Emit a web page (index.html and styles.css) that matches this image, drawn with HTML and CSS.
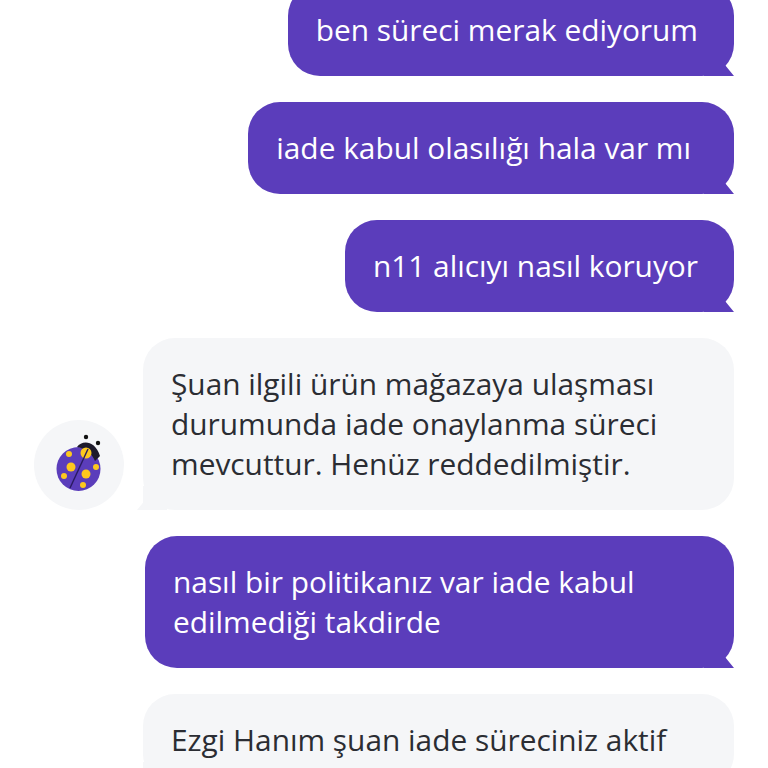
FILE: index.html
```html
<!DOCTYPE html>
<html lang="en">
<head>
    <meta charset="UTF-8">
    <meta name="viewport" content="width=device-width, initial-scale=1.0">
    <title>Chat</title>
    <link rel="stylesheet" href="styles.css">
</head>
<body>
    <div class="chat">
        <div class="row">
            <div class="bubble sent">ben süreci merak ediyorum</div>
        </div>
        <div class="row">
            <div class="bubble sent extra">iade kabul olasılığı hala var mı</div>
        </div>
        <div class="row">
            <div class="bubble sent">n11 alıcıyı nasıl koruyor</div>
        </div>
        <div class="row incoming">
            <div class="avatar">
                <svg width="90" height="90" viewBox="0 0 90 90">
                    <circle cx="52" cy="17" r="2.2" fill="#111"/>
                    <circle cx="64" cy="23" r="2.2" fill="#111"/>
                    <circle cx="44.5" cy="49" r="22" fill="#5b3dbb"/>
                    <path d="M43 27 C48 20 61 20 66 36 L61 41 C58 33 50 28 43 27 Z" fill="#1d1a2b"/>
                    <circle cx="52" cy="33" r="5.5" fill="#fdc81e"/>
                    <circle cx="35" cy="34" r="3" fill="#fdc81e"/>
                    <circle cx="37" cy="47" r="4.5" fill="#fdc81e"/>
                    <circle cx="30" cy="56" r="3" fill="#fdc81e"/>
                    <circle cx="52" cy="54" r="4.5" fill="#fdc81e"/>
                    <circle cx="62" cy="47" r="3" fill="#fdc81e"/>
                    <circle cx="49" cy="65" r="3" fill="#fdc81e"/>
                    <path d="M54 29 L36 68" stroke="#2a1a60" stroke-width="1.4" fill="none"/>
                </svg>
            </div>
            <div class="bubble received">Şuan ilgili ürün mağazaya ulaşması durumunda iade onaylanma süreci mevcuttur. Henüz reddedilmiştir.</div>
        </div>
        <div class="row">
            <div class="bubble sent wide">nasıl bir politikanız var iade kabul edilmediği takdirde</div>
        </div>
        <div class="row incoming">
            <div class="avatar-space"></div>
            <div class="bubble received">Ezgi Hanım şuan iade süreciniz aktif</div>
        </div>
    </div>
</body>
</html>
```

FILE: styles.css
```css
html, body {
    margin: 0;
    height: 768px;
    overflow: hidden;
    background-color: #fff;
}
body {
    font-family: "Open Sans", "Noto Sans", sans-serif;
}
.chat {
    display: flex;
    flex-direction: column;
    gap: 26px;
    margin-top: -16px;
    padding: 0 34px;
}
.row {
    display: flex;
    justify-content: flex-end;
}
.row.incoming {
    justify-content: flex-start;
    align-items: flex-end;
    gap: 19px;
}
.bubble {
    position: relative;
    padding: 26px 36px 26px 28px;
    border-radius: 32px;
    font-size: 29.85px;
    line-height: 40px;
}
.sent {
    background-color: #5b3dbb;
    color: #fff;
}
.sent::after {
    content: "";
    position: absolute;
    right: 0;
    bottom: 0;
    width: 30px;
    height: 24px;
    background-color: #5b3dbb;
    clip-path: polygon(0 0, 70% 0, 70% 54%, 100% 100%, 0 100%);
}
.extra {
    padding-right: 43px;
}
.wide {
    width: 525px;
}
.received {
    flex: 1;
    background-color: #f5f6f8;
    color: #2b2d33;
}
.received::after {
    content: "";
    position: absolute;
    left: -6px;
    bottom: 0;
    width: 30px;
    height: 24px;
    background-color: #f5f6f8;
    clip-path: polygon(20% 0, 100% 0, 100% 100%, 0 100%, 20% 70%);
}
.avatar {
    width: 90px;
    height: 90px;
    flex-shrink: 0;
    border-radius: 50%;
    background-color: #f5f6f8;
}
.avatar-space {
    width: 90px;
    flex-shrink: 0;
}
```
